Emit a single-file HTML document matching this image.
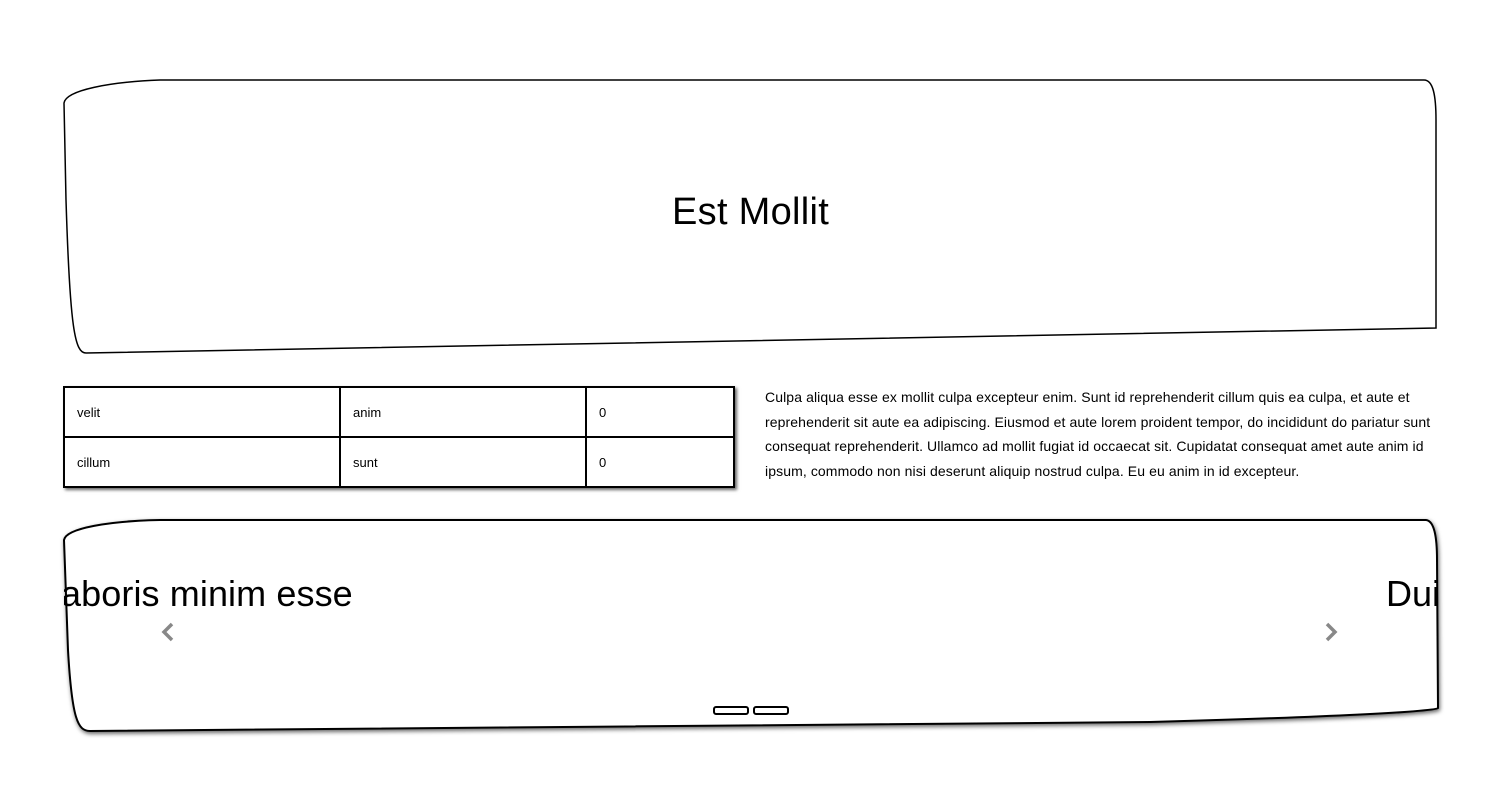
<!DOCTYPE html>
<html><head><meta charset="utf-8"><style>
body{margin:0;width:1500px;height:812px;background:#fff;position:relative;overflow:hidden;font-family:"Liberation Sans",sans-serif;color:#000}
svg.bg{position:absolute;left:0;top:0}
.t{position:absolute;white-space:nowrap}
table{position:absolute;left:63px;top:386px;width:672px;border-collapse:collapse;box-shadow:2px 2px 3px rgba(0,0,0,.6);font-size:13px}
td{border:2px solid #000;height:46px;padding:0 12px}
p{position:absolute;left:765px;top:385px;width:668px;margin:0;font-size:14px;line-height:24.5px;letter-spacing:0.1px}
.dot{position:absolute;top:706px;width:32px;height:5px;border:2px solid #000;border-radius:3px;background:#fff}
</style></head><body>
<svg class="bg" width="1500" height="812">
<defs><filter id="s"><feDropShadow dx="1" dy="2" stdDeviation="2" flood-opacity="0.6"/></filter></defs>
<path d="M64,103 C66,90 110,82 160,80 L1424,80 C1433,80 1436,95 1436,120 L1436,328 L86,353 C75,353 70,330 66,200 Z" fill="#fff" stroke="#000" stroke-width="1.5"/>
<path d="M64,540 C66,528 110,521 160,520 L1426,520 C1435,521 1437,540 1437,560 L1438,708 C1436,712 1300,718 1150,722 L90,731 C78,731 72,720 68,650 Z" fill="#fff" stroke="#000" stroke-width="2" filter="url(#s)"/>
<path d="M172,624 L164,632 L172,640" fill="none" stroke="#888" stroke-width="3.5"/>
<path d="M1327,624 L1335,632 L1327,640" fill="none" stroke="#888" stroke-width="3.5"/>
</svg>
<div class="t" style="left:672px;top:191px;font-size:38px;letter-spacing:0.3px">Est Mollit</div>
<table><tr><td style="width:250px;height:48px">velit</td><td style="width:220px">anim</td><td>0</td></tr><tr><td style="height:48px">cillum</td><td>sunt</td><td>0</td></tr></table>
<p>Culpa aliqua esse ex mollit culpa excepteur enim. Sunt id reprehenderit cillum quis ea culpa, et aute et reprehenderit sit aute ea adipiscing. Eiusmod et aute lorem proident tempor, do incididunt do pariatur sunt consequat reprehenderit. Ullamco ad mollit fugiat id occaecat sit. Cupidatat consequat amet aute anim id ipsum, commodo non nisi deserunt aliquip nostrud culpa. Eu eu anim in id excepteur.</p>
<div style="position:absolute;left:64px;top:560px;width:1373px;height:80px;overflow:hidden">
<div class="t" style="left:-3px;top:13px;font-size:36px;letter-spacing:0.1px">aboris minim esse</div>
<div class="t" style="left:1322px;top:13px;font-size:36px">Dui</div>
</div>
<div class="dot" style="left:713px"></div><div class="dot" style="left:753px"></div>
</body></html>
